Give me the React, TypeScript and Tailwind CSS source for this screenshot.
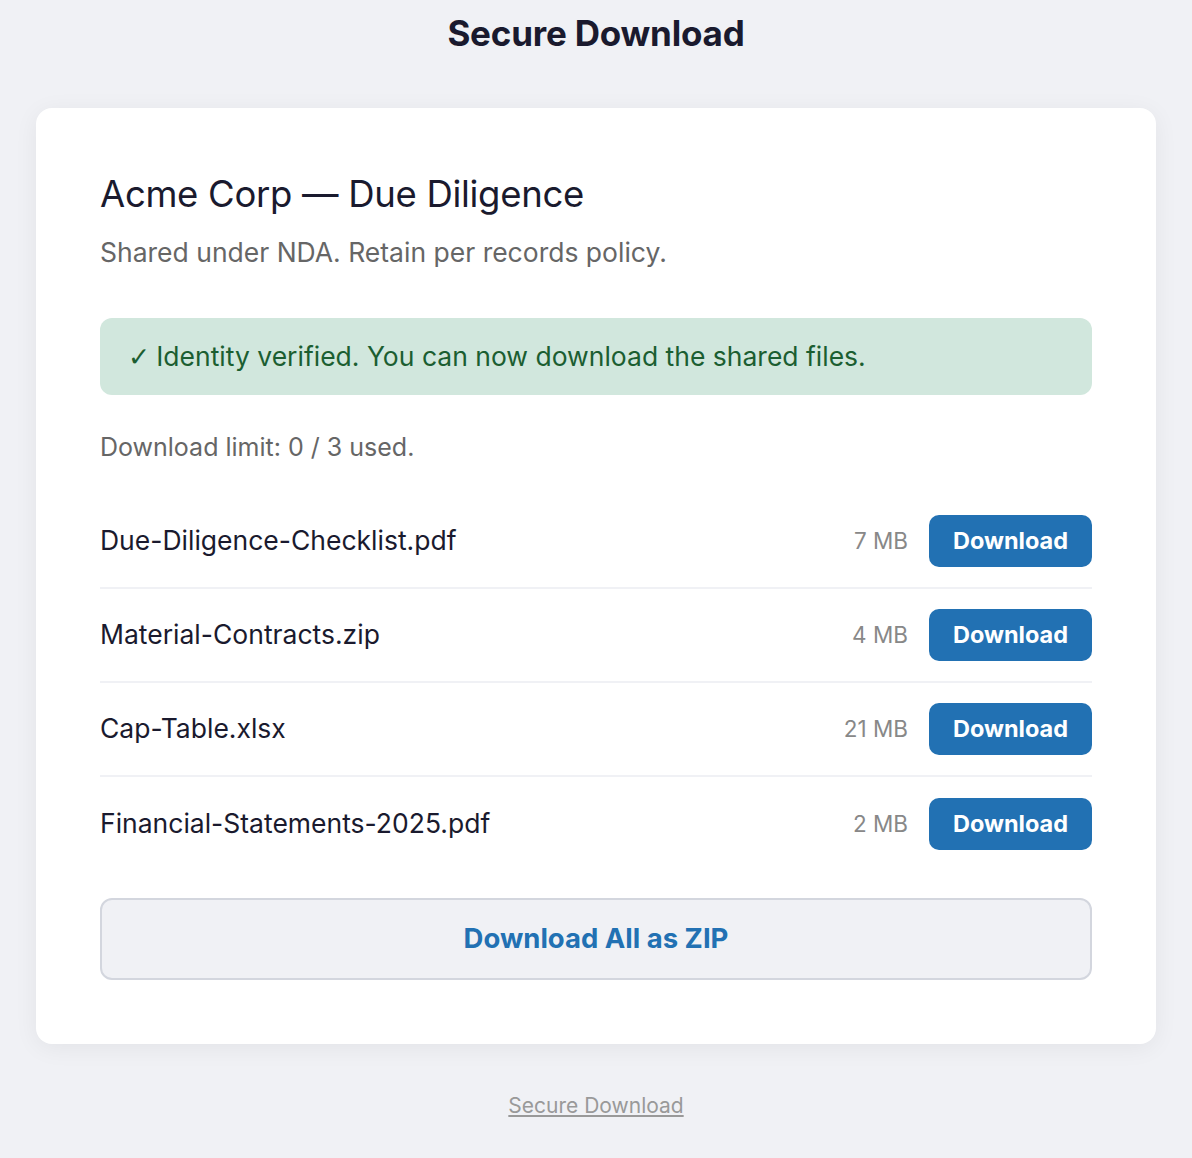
import React from "react";

const files = [
  { name: "Due-Diligence-Checklist.pdf", size: "7 MB" },
  { name: "Material-Contracts.zip", size: "4 MB" },
  { name: "Cap-Table.xlsx", size: "21 MB" },
  { name: "Financial-Statements-2025.pdf", size: "2 MB" },
];

export default function App() {
  return (
    <div
      className="min-h-[1158px] w-full bg-[#f0f1f5] flex flex-col items-center"
      style={{ fontFamily: "Inter, 'Noto Sans', sans-serif" }}
    >
      <h1 className="mt-[12px] text-[35px] leading-[42px] font-bold text-[#1a1a2e] tracking-[-0.2px]">
        Secure Download
      </h1>
      <div className="mt-[54px] w-[1120px] bg-white rounded-[16px] shadow-[0_4px_24px_rgba(0,0,0,0.06)] px-[64px] pt-[64px] pb-[64px]">
        <h2 className="text-[36.5px] leading-[44px] font-normal text-[#1a1a2e] tracking-[-0.3px]">
          Acme Corp — Due Diligence
        </h2>
        <p className="mt-[19px] text-[26.5px] leading-[34px] text-[#666]">
          Shared under NDA. Retain per records policy.
        </p>
        <div className="mt-[49px] h-[77px] flex items-center px-[28px] rounded-[12px] bg-[#d1e7dd] text-[#1b5e31] text-[26.5px]">
          <span className="mr-[6px]" style={{ fontFamily: "'DejaVu Sans', sans-serif" }}>
            ✓
          </span>
          Identity verified. You can now download the shared files.
        </div>
        <p className="mt-[36px] text-[25px] leading-[32px] text-[#666]">
          Download limit: 0 / 3 used.
        </p>
        <div className="mt-[32px] flex flex-col">
          {files.map((f, i) => (
            <div
              key={f.name}
              className={
                "flex items-center h-[94px] " +
                (i < files.length - 1 ? "border-b-2 border-[#f0f1f5]" : "")
              }
            >
              <span className="flex-1 text-[26.5px] text-[#1a1a2e]">{f.name}</span>
              <span className="text-[22.5px] text-[#888] mr-[21px]">{f.size}</span>
              <button className="w-[163px] h-[52px] rounded-[10px] bg-[#2271b3] text-white text-[23.5px] font-bold">
                Download
              </button>
            </div>
          ))}
        </div>
        <button className="mt-[27px] w-full h-[82px] rounded-[12px] bg-[#f0f1f5] border-2 border-[#d3d6de] text-[#2271b3] text-[27.5px] font-bold">
          Download All as ZIP
        </button>
      </div>
      <a className="mt-[46px] text-[21px] text-[#999] underline">Secure Download</a>
    </div>
  );
}
